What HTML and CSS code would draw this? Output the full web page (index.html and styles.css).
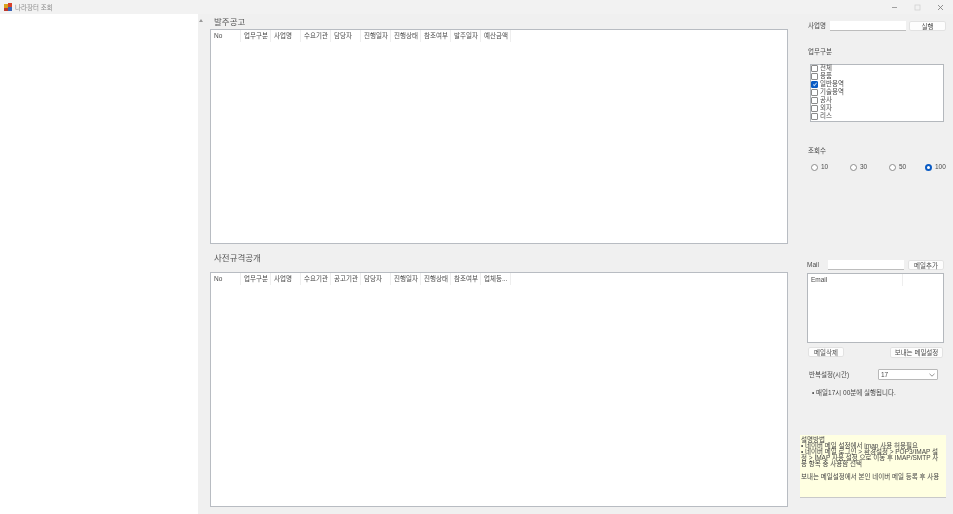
FILE: index.html
```html
<!DOCTYPE html>
<html lang="ko">
<head>
    <meta charset="UTF-8">
    <meta name="viewport" content="width=device-width, initial-scale=1.0">
    <title>나라장터 조회</title>
    <link rel="stylesheet" href="styles.css">
</head>
<body>
    <div class="titlebar">
        <svg class="app-icon" width="8" height="8" viewBox="0 0 8 8">
            <rect x="0" y="1" width="4" height="4" fill="#d9a21b"/>
            <rect x="4" y="0" width="4" height="4" fill="#d8402b"/>
            <rect x="0" y="5" width="4" height="3" fill="#c0392b"/>
            <rect x="4" y="4" width="4" height="4" fill="#3a62b5"/>
        </svg>
        <span class="app-title">나라장터 조회</span>
        <div class="win-buttons">
            <svg width="7" height="7" viewBox="0 0 7 7"><path d="M1 3.5H6" stroke="#8a8a8a" stroke-width="0.8"/></svg>
            <svg width="7" height="7" viewBox="0 0 7 7"><rect x="1" y="1" width="5" height="5" fill="none" stroke="#d2d2d2" stroke-width="0.8"/></svg>
            <svg width="7" height="7" viewBox="0 0 7 7"><path d="M1 1L6 6M6 1L1 6" stroke="#777" stroke-width="0.8"/></svg>
        </div>
    </div>

    <div class="window">
        <div class="tree"></div>
        <div class="tree-scroll"><span class="arrow-up"></span></div>

        <div class="center">
            <h2 class="group-title">발주공고</h2>
            <div class="listview first">
                <div class="lv-head">
                    <span>No</span><span>업무구분</span><span>사업명</span><span>수요기관</span><span>담당자</span>
                    <span>진행일자</span><span>진행상태</span><span>참조여부</span><span>발주일자</span><span>예산금액</span>
                </div>
            </div>
            <h2 class="group-title second">사전규격공개</h2>
            <div class="listview last">
                <div class="lv-head">
                    <span>No</span><span>업무구분</span><span>사업명</span><span>수요기관</span><span>공고기관</span>
                    <span>담당자</span><span>진행일자</span><span>진행상태</span><span>참조여부</span><span>업체등...</span>
                </div>
            </div>
        </div>

        <div class="side">
            <div class="row row-search">
                <label class="lbl lbl-name">사업명</label>
                <div class="textbox tb-search"></div>
                <button class="btn btn-run">실행</button>
            </div>

            <div class="lbl section-work">업무구분</div>
            <div class="checklist">
                <div class="chk-row"><span class="chk"></span>전체</div>
                <div class="chk-row"><span class="chk"></span>용품</div>
                <div class="chk-row"><span class="chk on"></span>일반용역</div>
                <div class="chk-row"><span class="chk"></span>기술용역</div>
                <div class="chk-row"><span class="chk"></span>공사</div>
                <div class="chk-row"><span class="chk"></span>외자</div>
                <div class="chk-row"><span class="chk"></span>리스</div>
            </div>

            <div class="lbl section-count">조회수</div>
            <div class="radios">
                <div class="radio-item"><span class="radio"></span>10</div>
                <div class="radio-item"><span class="radio"></span>30</div>
                <div class="radio-item"><span class="radio"></span>50</div>
                <div class="radio-item"><span class="radio on"></span>100</div>
            </div>

            <div class="row row-mail">
                <label class="lbl lbl-mail">Mail</label>
                <div class="textbox tb-mail"></div>
                <button class="btn btn-add">메일추가</button>
            </div>
            <div class="mail-list">
                <div class="mail-col">Email</div>
            </div>
            <div class="row row-mail-btns">
                <button class="btn btn-del">메일삭제</button>
                <button class="btn btn-send">보내는 메일설정</button>
            </div>

            <div class="row row-repeat">
                <span class="lbl lbl-repeat">반복설정(시간)</span>
                <div class="combo">17
                    <svg width="6" height="4" viewBox="0 0 6 4"><path d="M0.5 0.8L3 3.2L5.5 0.8" fill="none" stroke="#666" stroke-width="0.7"/></svg>
                </div>
            </div>
            <div class="lbl repeat-note">• 매일17시 00분에 실행됩니다.</div>

            <div class="help-box">
                <p>설명방법</p>
                <p>• 네이버 메일 설정에서 imap 사용 허용필요</p>
                <p>• 네이버 메일 로그인 &gt; 환경설정 &gt; POP3/IMAP 설정 &gt; IMAP 사용 설정 으로 이동 후 IMAP/SMTP 사용 항목 중 사용함 선택</p>
                <p class="help-gap">보내는 메일설정에서 본인 네이버 메일 등록 후 사용</p>
            </div>
        </div>
    </div>
</body>
</html>
```

FILE: styles.css
```css
/* General */
html, body {
    margin: 0;
    padding: 0;
    height: 514px;
    overflow: hidden;
}

body {
    font-family: 'Liberation Sans', 'Noto Sans CJK KR', sans-serif;
    font-size: 6.5px;
    color: #4a4a4a;
    background: #f0f0f0;
}

/* Title bar */
.titlebar {
    height: 14px;
    display: flex;
    align-items: center;
    background: #f2f2f2;
    padding-left: 4px;
    will-change: transform;
}

.app-icon {
    margin-right: 3px;
}

.app-title {
    font-size: 6.5px;
    color: #8e8e8e;
}

.win-buttons {
    margin-left: auto;
    display: flex;
    gap: 16px;
    padding-right: 9px;
}

/* Window body */
.window {
    display: flex;
    height: 500px;
    will-change: transform; /* grey text edges like the screenshot */
}

.tree {
    width: 198px;
    background: #fff;
}

.tree-scroll {
    width: 12px;
    display: flex;
    padding: 5px 0 0 1px;
    box-sizing: border-box;
}

.arrow-up {
    width: 0;
    height: 0;
    border-left: 2.5px solid transparent;
    border-right: 2.5px solid transparent;
    border-bottom: 3px solid #999;
}

/* List views */
.center {
    width: 578px;
}

.group-title {
    margin: 0;
    height: 15px;
    line-height: 17px;
    padding-left: 4px;
    font-size: 8.5px;
    font-weight: normal;
    color: #555;
}

.group-title.second {
    height: 28px;
    line-height: 29px;
}

.listview {
    box-sizing: border-box;
    background: #fff;
    border: 1px solid #b8bcc2;
}

.listview.first {
    height: 215px;
}

.listview.last {
    height: 235px;
}

.lv-head {
    display: flex;
    height: 12px;
}

.lv-head span {
    box-sizing: border-box;
    width: 30px;
    padding-left: 3px;
    line-height: 12px;
    font-size: 6.5px;
    white-space: nowrap;
    border-right: 1px solid #eeeeee;
}

/* Right side panel */
.side {
    width: 165px;
    box-sizing: border-box;
    padding-left: 20px;
}

.row {
    display: flex;
    align-items: center;
}

.lbl {
    font-size: 6.5px;
    line-height: 10px;
    white-space: nowrap;
}

.textbox {
    box-sizing: border-box;
    background: #fff;
    border-bottom: 1px solid #bdbdbd;
}

.btn {
    box-sizing: border-box;
    padding: 0;
    font-family: inherit;
    font-size: 6.5px;
    line-height: 9px;
    color: #4a4a4a;
    background: #fdfdfd;
    border: 1px solid #e2e2e2;
    border-radius: 2px;
}

.row-search {
    height: 10px;
    margin-top: 7px;
}

.lbl-name {
    width: 22px;
}

.tb-search {
    width: 76px;
    height: 10px;
}

.btn-run {
    width: 37px;
    height: 10px;
    margin-left: 3px;
}

.section-work {
    margin-top: 16px;
}

.checklist {
    box-sizing: border-box;
    width: 134px;
    height: 58px;
    margin: 7px 0 0 2px;
    background: #fff;
    border: 1px solid #b4b8bd;
}

.chk-row {
    display: flex;
    height: 8px;
    line-height: 6px;
}

.chk {
    box-sizing: border-box;
    display: flex;
    justify-content: center;
    width: 7px;
    height: 7px;
    margin-right: 2px;
    border: 1px solid #8a8a8a;
    border-radius: 1px;
    background: #fff;
}

.chk.on {
    background: #0a5bc4;
    border-color: #0a5bc4;
}

.chk.on::after {
    content: "";
    box-sizing: border-box;
    width: 2px;
    height: 4px;
    border-right: 1px solid #b9d3f3;
    border-bottom: 1px solid #b9d3f3;
    transform: rotate(40deg);
}

.section-count {
    margin-top: 24px;
}

.radios {
    display: flex;
    margin: 6px 0 0 3px;
}

.radio-item {
    display: flex;
    align-items: center;
    width: 39px;
    height: 10px;
    line-height: 10px;
    font-size: 6.5px;
}

.radio-item:last-child {
    width: 24px;
    margin-left: -3px;
}

.radio {
    box-sizing: border-box;
    width: 7px;
    height: 7px;
    margin-right: 3px;
    border: 1px solid #8a8a8a;
    border-radius: 50%;
    background: #fff;
}

.radio.on {
    border: 2px solid #0a5bc4;
}

.row-mail {
    height: 10px;
    margin-top: 88px;
    margin-left: -1px;
}

.lbl-mail {
    width: 21px;
}

.tb-mail {
    width: 76px;
    height: 10px;
}

.btn-add {
    width: 36px;
    height: 10px;
    margin-left: 4px;
}

.mail-list {
    box-sizing: border-box;
    width: 137px;
    height: 70px;
    margin: 3px 0 0 -1px;
    padding: 0 0 0 3px;
    background: #fff;
    border: 1px solid #b4b8bd;
}

.mail-col {
    width: 91px;
    height: 12px;
    line-height: 12px;
    border-right: 1px solid #eeeeee;
}

.row-mail-btns {
    justify-content: space-between;
    width: 135px;
    height: 12px;
    margin-top: 3px;
}

.btn-del {
    width: 36px;
    height: 10px;
}

.btn-send {
    width: 53px;
    height: 11px;
    margin-top: 1px;
}

.row-repeat {
    height: 11px;
    margin: 11px 0 0 1px;
}

.lbl-repeat {
    width: 69px;
}

.combo {
    box-sizing: border-box;
    display: flex;
    align-items: center;
    justify-content: space-between;
    width: 60px;
    height: 11px;
    padding: 0 2px;
    background: #fff;
    border: 1px solid #b8b8b8;
    border-radius: 1px;
}

.repeat-note {
    margin: 8px 0 0 4px;
    color: #444;
}

.help-box {
    box-sizing: border-box;
    width: 146px;
    height: 63px;
    margin: 37px 0 0 -8px;
    padding: 2px 3px 0 1px;
    background: #ffffe1;
    border-bottom: 1px solid #c9c9c9;
    font-size: 6.5px;
    line-height: 6px;
    color: #444;
}

.help-box p {
    margin: 0;
}

.help-box .help-gap {
    margin-top: 7px;
}
```
